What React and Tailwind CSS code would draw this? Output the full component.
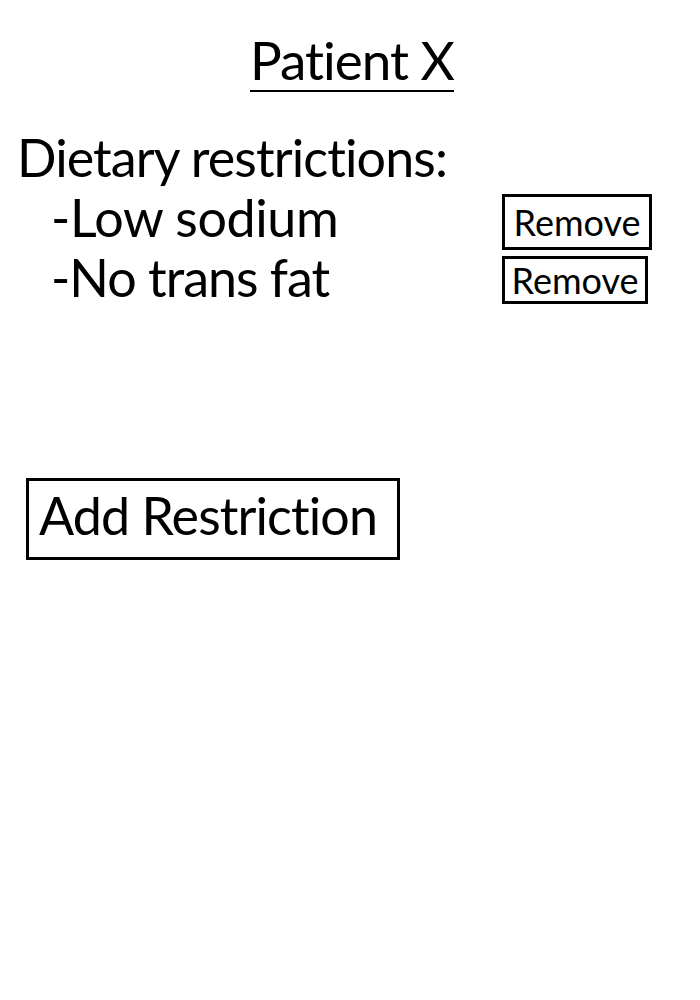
export default function App() {
  return (
    <div className="w-[700px] h-[1000px] bg-white text-black" style={{ fontFamily: 'Lato, "Noto Sans", sans-serif' }}>
      <div className="flex justify-center pt-[30px] pl-[4px]">
        <h1 className="text-[53px] leading-[60px] tracking-[-1px] border-b-2 border-black">Patient X</h1>
      </div>
      <div className="pl-[17px] pt-[35px] text-[52px] leading-[60px] tracking-[-0.9px]">
        <div>Dietary restrictions:</div>
        <div className="flex items-start justify-between pr-[48px] h-[60px]">
          <span className="pl-[34px] tracking-[-0.4px]">-Low sodium</span>
          <button className="mt-[7px] border-[3px] border-black text-[36px] leading-[46px] w-[150px] h-[56px] tracking-normal">Remove</button>
        </div>
        <div className="flex items-start justify-between pr-[52px] h-[59px]">
          <span className="pl-[34px] tracking-[-1px]">-No trans fat</span>
          <button className="mt-[9px] border-[3px] border-black text-[36px] leading-[40px] w-[146px] h-[48px] tracking-normal">Remove</button>
        </div>
      </div>
      <div className="pl-[26px] pt-[172px]">
        <button className="border-[3px] border-black text-[52px] leading-[68px] h-[82px] w-[374px] text-left pl-[10px] pb-[10px] tracking-[-0.9px] whitespace-nowrap">Add Restriction</button>
      </div>
    </div>
  );
}
